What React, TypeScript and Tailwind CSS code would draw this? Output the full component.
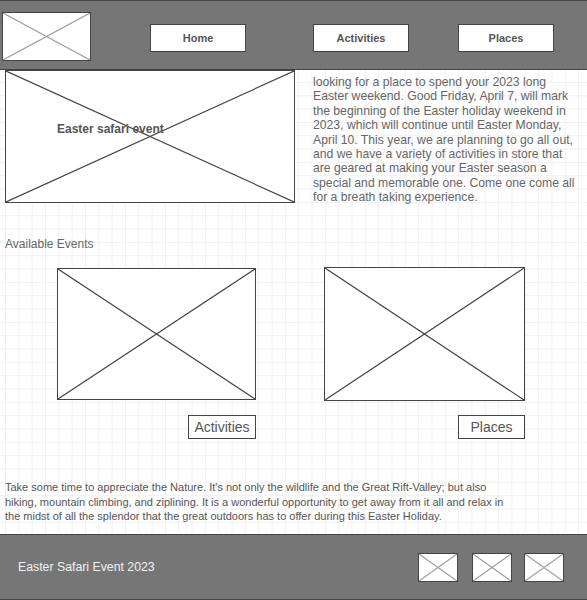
import React from "react";

function XBox({
  className,
  stroke,
}: {
  className: string;
  stroke: string;
}) {
  return (
    <div className={"relative bg-white border border-[#444] " + className}>
      <svg
        className="absolute inset-0 w-full h-full"
        viewBox="0 0 100 100"
        preserveAspectRatio="none"
      >
        <line x1="0" y1="0" x2="100" y2="100" stroke={stroke} strokeWidth="1.2" vectorEffect="non-scaling-stroke" />
        <line x1="100" y1="0" x2="0" y2="100" stroke={stroke} strokeWidth="1.2" vectorEffect="non-scaling-stroke" />
      </svg>
    </div>
  );
}

function NavButton({ label, className }: { label: string; className: string }) {
  return (
    <div
      className={
        "w-[96px] h-[28px] bg-white border border-[#444] flex items-center justify-center text-[11px] font-bold text-[#555] " +
        className
      }
    >
      {label}
    </div>
  );
}

export default function App() {
  return (
    <div className="w-[587px] h-[600px] flex flex-col overflow-hidden bg-white bg-[linear-gradient(to_right,#f0f0f0_1px,transparent_1px),linear-gradient(to_bottom,#f0f0f0_1px,transparent_1px)] bg-size-[13.333px_13.333px] bg-position-[5px_2px] font-['Liberation_Sans',Arial,sans-serif]">
      {/* Header */}
      <header className="h-[70px] shrink-0 bg-[#767676] border-t border-b border-[#444] flex items-start">
        <XBox className="ml-[2px] mt-[11px] w-[89px] h-[49px]" stroke="#a0a0a0" />
        <NavButton label="Home" className="ml-[59px] mt-[23px]" />
        <NavButton label="Activities" className="ml-[67px] mt-[23px]" />
        <NavButton label="Places" className="ml-[49px] mt-[23px]" />
      </header>

      {/* Hero row */}
      <div className="flex items-start h-[133px] shrink-0">
        <div className="relative ml-[5px]">
          <XBox className="w-[290px] h-[133px]" stroke="#444" />
          <span className="absolute left-[52px] top-[52px] text-[12px] font-bold text-[#555] leading-[14px] whitespace-nowrap">
            Easter safari event
          </span>
        </div>
        <p className="ml-[18px] mt-[5px] w-[266px] text-[12.2px] leading-[14.4px] text-[#666]">
          looking for a place to spend your 2023 long Easter weekend. Good Friday, April 7, will mark the
          beginning of the Easter holiday weekend in 2023, which will continue until Easter Monday, April
          10. This year, we are planning to go all out, and we have a variety of activities in store that
          are geared at making your Easter season a special and memorable one. Come one come all for a
          breath taking experience.
        </p>
      </div>

      {/* Available events */}
      <div className="ml-[5px] mt-[34px] text-[12px] leading-[14px] text-[#666]">Available Events</div>

      <div className="flex items-start mt-[16px] shrink-0">
        <div className="ml-[57px] w-[199px] flex flex-col mt-[1px]">
          <XBox className="w-[199px] h-[132px]" stroke="#444" />
          <div className="self-end mt-[15px] w-[68px] h-[24px] border border-[#444] bg-white flex items-center justify-center text-[14px] text-[#555]">
            Activities
          </div>
        </div>
        <div className="ml-[68px] w-[201px] flex flex-col">
          <XBox className="w-[201px] h-[134px]" stroke="#444" />
          <div className="self-end mt-[14px] w-[67px] h-[24px] border border-[#444] bg-white flex items-center justify-center text-[14px] text-[#555]">
            Places
          </div>
        </div>
      </div>

      <p className="ml-[5px] mt-[41px] w-[505px] text-[11px] leading-[14.6px] text-[#555]">
        Take some time to appreciate the Nature. It's not only the wildlife and the Great Rift-Valley; but
        also hiking, mountain climbing, and ziplining. It is a wonderful opportunity to get away from it all
        and relax in the midst of all the splendor that the great outdoors has to offer during this Easter
        Holiday.
      </p>

      {/* Footer */}
      <footer className="mt-auto h-[66px] shrink-0 bg-[#767676] border-t border-b border-[#444] flex items-center">
        <span className="ml-[18px] text-[12.3px] leading-[14px] text-[#f2f2f2]">Easter Safari Event 2023</span>
        <div className="ml-auto mr-[23px] flex items-center">
          <XBox className="w-[40px] h-[29px]" stroke="#a0a0a0" />
          <XBox className="ml-[14px] w-[40px] h-[29px]" stroke="#a0a0a0" />
          <XBox className="ml-[12px] w-[40px] h-[29px]" stroke="#a0a0a0" />
        </div>
      </footer>
    </div>
  );
}
